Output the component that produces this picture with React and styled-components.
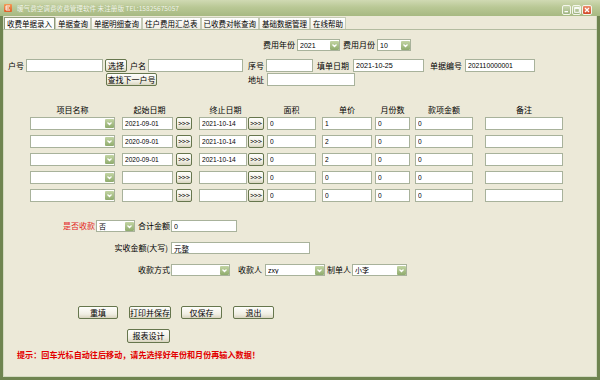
import React from "react";
import styled, { createGlobalStyle } from "styled-components";

const Global = createGlobalStyle`
  html, body { margin: 0; padding: 0; background: #ece9d8; }
  body { font-family: "Noto Sans CJK SC", "Liberation Sans", sans-serif; }
`;

const Window = styled.div`
  width: 600px;
  height: 380px;
  display: flex;
  flex-direction: column;
  overflow: hidden;
  background: #ece9d8;
`;

const TitleBar = styled.div`
  flex: none;
  height: 16px;
  display: flex;
  align-items: center;
  padding: 0 8px 0 4px;
  background: linear-gradient(#d0dab3, #b9c895 45%, #a7b982);
`;

const AppIcon = styled.span`
  flex: none;
  width: 8px;
  height: 8px;
  border-radius: 1px;
  background: linear-gradient(#f39a55, #e0602a);
  display: flex;
  align-items: center;
  justify-content: center;
`;

const Title = styled.span`
  margin-left: 5px;
  flex: 1;
  font-size: 6.6px;
  color: #f6f8ee;
  white-space: nowrap;
  text-shadow: 0 0 1px #9aae74;
`;

const Ctl = styled.span`
  flex: none;
  box-sizing: border-box;
  width: ${p => (p.$close ? 10 : 9)}px;
  height: 10px;
  margin-left: 1px;
  margin-top: 3px;
  border: 1px solid #f4f6ec;
  border-radius: 2px;
  background: ${p =>
    p.$close
      ? "linear-gradient(#ec8d6c, #d2492a)"
      : "linear-gradient(#cbd8b0, #9db27f)"};
  display: flex;
  align-items: center;
  justify-content: center;
`;

const Body = styled.div`
  flex: 1;
  display: flex;
  flex-direction: column;
  border: 3px solid #6f8450;
  border-top: none;
  box-shadow: inset 1px 0 0 #d3dac0, inset -1px -1px 0 #d3dac0;
`;

const TabBar = styled.div`
  flex: none;
  display: flex;
  height: 12px;
  margin-top: 1px;
  padding-left: 1px;
  border-bottom: 1px solid #b3bca0;
`;

const Tab = styled.div`
  box-sizing: border-box;
  height: 12px;
  padding: 0 2px;
  font-size: 7.5px;
  line-height: 11px;
  white-space: nowrap;
  color: #000;
  border: 1px solid ${p => (p.$active ? "#8e9978" : "#c6cbb6")};
  border-bottom: none;
  background: ${p =>
    p.$active ? "#fdfdfb" : "linear-gradient(#ffffff, #f0eee4)"};
`;

const Row = styled.div`
  flex: none;
  display: flex;
  align-items: center;
  height: ${p => p.$h || 13}px;
  margin-top: ${p => p.$mt || 0}px;
`;

const Label = styled.span`
  flex: none;
  margin-left: ${p => p.$ml || 0}px;
  width: ${p => (p.$w ? `${p.$w}px` : "auto")};
  text-align: ${p => p.$align || "left"};
  font-size: 8px;
  line-height: 12px;
  white-space: nowrap;
  color: ${p => (p.$red ? "#e31d1d" : "#000")};
`;

const Field = styled.input`
  flex: none;
  box-sizing: border-box;
  margin: 0 0 0 ${p => p.$ml || 0}px;
  width: ${p => p.$w}px;
  height: 100%;
  padding: 0 2px;
  border: 1px solid #a8b29b;
  background: #fff;
  font-family: "Liberation Sans", "Noto Sans CJK SC", sans-serif;
  font-size: ${p => p.$fs || 7}px;
  color: #000;
  outline: none;
`;

const Combo = styled.div`
  flex: none;
  box-sizing: border-box;
  margin-left: ${p => p.$ml || 0}px;
  width: ${p => p.$w}px;
  height: 100%;
  display: flex;
  align-items: center;
  padding-left: 2px;
  border: 1px solid #a8b29b;
  background: #fff;
  font-family: "Liberation Sans", "Noto Sans CJK SC", sans-serif;
  font-size: 7px;
`;

const ComboText = styled.span`
  flex: 1;
  overflow: hidden;
  white-space: nowrap;
`;

const Arrow = styled.span`
  flex: none;
  width: 9px;
  height: 9px;
  border-radius: 1px;
  background: linear-gradient(#c3d5a4, #8fab6d);
  display: flex;
  align-items: center;
  justify-content: center;
`;

const Btn = styled.button`
  flex: none;
  box-sizing: border-box;
  margin: 0 0 0 ${p => p.$ml || 0}px;
  width: ${p => p.$w}px;
  height: 100%;
  padding: 0;
  border: 1px solid #66764d;
  border-radius: 2px;
  background: linear-gradient(#fefefb, #f0eee3 65%, #d9d5c0);
  font-family: "Noto Sans CJK SC", "Liberation Sans", sans-serif;
  font-size: ${p => p.$fs || 8}px;
  line-height: 1;
  color: #000;
  white-space: nowrap;
  display: flex;
  align-items: center;
  justify-content: center;
`;

const Head = styled.span`
  flex: none;
  box-sizing: border-box;
  margin-left: ${p => p.$ml || 0}px;
  width: ${p => p.$w}px;
  padding-left: ${p => p.$shift || 0}px;
  text-align: center;
  font-size: 8px;
  line-height: 11px;
  color: #000;
  white-space: nowrap;
`;

const Hint = styled.div`
  flex: none;
  margin: 7px 0 0 14px;
  font-size: 8.1px;
  line-height: 10px;
  font-weight: bold;
  color: #e30000;
  white-space: nowrap;
`;

const Chevron = () => (
  <svg width="7" height="7" viewBox="0 0 7 7">
    <path d="M1.5 2.5 L3.5 4.5 L5.5 2.5" fill="none" stroke="#fff" strokeWidth="1.3" />
  </svg>
);

const Select = ({ ml, w, value }) => (
  <Combo $ml={ml} $w={w}>
    <ComboText>{value}</ComboText>
    <Arrow>
      <Chevron />
    </Arrow>
  </Combo>
);

const tabs = ["收费单据录入", "单据查询", "单据明细查询", "住户费用汇总表", "已收费对帐查询", "基础数据管理", "在线帮助"];

const cols = [
  { key: "name", ml: 27, w: 85, kind: "combo", title: "项目名称" },
  { key: "start", ml: 7, w: 51, title: "起始日期", shift: 4 },
  { key: "b1", ml: 3, w: 16, kind: "btn" },
  { key: "end", ml: 7, w: 48, title: "终止日期", shift: 5 },
  { key: "b2", ml: 1, w: 16, kind: "btn" },
  { key: "area", ml: 3, w: 49, title: "面积" },
  { key: "price", ml: 6, w: 50, title: "单价" },
  { key: "months", ml: 3, w: 35, title: "月份数" },
  { key: "amount", ml: 5, w: 58, title: "款项金额" },
  { key: "note", ml: 12, w: 78, title: "备注" },
];

const items = [
  { start: "2021-09-01", end: "2021-10-14", area: "0", price: "1", months: "0", amount: "0" },
  { start: "2020-09-01", end: "2021-10-14", area: "0", price: "2", months: "0", amount: "0" },
  { start: "2020-09-01", end: "2021-10-14", area: "0", price: "2", months: "0", amount: "0" },
  { start: "", end: "", area: "0", price: "0", months: "0", amount: "0" },
  { start: "", end: "", area: "0", price: "0", months: "0", amount: "0" },
];

export default function App() {
  return (
    <Window>
      <Global />
      <TitleBar>
        <AppIcon>
          <svg width="6" height="6" viewBox="0 0 6 6">
            <path d="M1 1 H5 M1 3 H4 M1 1 V5 H5" fill="none" stroke="#fff" strokeWidth="0.9" />
          </svg>
        </AppIcon>
        <Title>暖气费空调费收费管理软件 未注册版 TEL:15825675057</Title>
        <Ctl>
          <svg width="6" height="6" viewBox="0 0 6 6">
            <rect x="0.5" y="4" width="3.5" height="1.3" fill="#fff" />
          </svg>
        </Ctl>
        <Ctl>
          <svg width="6" height="6" viewBox="0 0 6 6">
            <rect x="0.7" y="0.7" width="4.6" height="4.6" fill="none" stroke="#fff" strokeWidth="1" />
            <rect x="0.7" y="0.5" width="4.6" height="1.3" fill="#fff" />
          </svg>
        </Ctl>
        <Ctl $close>
          <svg width="6" height="6" viewBox="0 0 6 6">
            <path d="M1 1 L5 5 M5 1 L1 5" stroke="#fff" strokeWidth="1.3" />
          </svg>
        </Ctl>
      </TitleBar>

      <Body>
        <TabBar>
          {tabs.map((t, i) => (
            <Tab key={t} $active={i === 0}>{t}</Tab>
          ))}
        </TabBar>

        <Row $mt={9} $h={12}>
          <Label $ml={260} $w={32}>费用年份</Label>
          <Select ml={2} w={43} value="2021" />
          <Label $ml={3} $w={32}>费用月份</Label>
          <Select ml={2} w={34} value="10" />
        </Row>

        <Row $mt={8}>
          <Label $ml={5} $w={16}>户号</Label>
          <Field $ml={2} $w={77} readOnly defaultValue="" />
          <Btn $ml={2} $w={22}>选择</Btn>
          <Label $ml={3} $w={16}>户名</Label>
          <Field $ml={2} $w={95} readOnly defaultValue="" />
          <Label $ml={5} $w={16}>序号</Label>
          <Field $ml={2} $w={47} readOnly defaultValue="" />
          <Label $ml={4} $w={32}>填单日期</Label>
          <Field $ml={4} $w={71} $fs={7.2} readOnly defaultValue="2021-10-25" />
          <Label $ml={6} $w={32}>单据编号</Label>
          <Field $ml={3} $w={70} $fs={6.8} readOnly defaultValue="202110000001" />
        </Row>

        <Row $mt={1}>
          <Btn $ml={103} $w={51}>查找下一户号</Btn>
          <Label $ml={91} $w={16}>地址</Label>
          <Field $ml={3} $w={88} readOnly defaultValue="" />
        </Row>

        <Row $mt={18} $h={11}>
          {cols.map(c => (
            <Head key={c.key} $ml={c.ml} $w={c.w} $shift={c.shift}>{c.title || ""}</Head>
          ))}
        </Row>

        {items.map((it, r) => (
          <Row key={r} $mt={r === 0 ? 2 : 5}>
            {cols.map(c => {
              if (c.kind === "combo") return <Select key={c.key} ml={c.ml} w={c.w} value="" />;
              if (c.kind === "btn")
                return (
                  <Btn key={c.key} $ml={c.ml} $w={c.w} $fs={7}>
                    &gt;&gt;&gt;
                  </Btn>
                );
              return (
                <Field
                  key={c.key}
                  $ml={c.ml}
                  $w={c.w}
                  $fs={6.6}
                  readOnly
                  defaultValue={it[c.key] || ""}
                />
              );
            })}
          </Row>
        ))}

        <Row $mt={18} $h={12}>
          <Label $ml={60} $w={32} $red>是否收款</Label>
          <Select ml={1} w={39} value="否" />
          <Label $ml={3} $w={32}>合计金额</Label>
          <Field $ml={1} $w={66} readOnly defaultValue="0" />
        </Row>

        <Row $mt={10} $h={12}>
          <Label $ml={105} $w={60} $align="right">实收金额(大写)</Label>
          <Field $ml={3} $w={139} $fs={7.5} readOnly defaultValue="元整" />
        </Row>

        <Row $mt={10} $h={12}>
          <Label $ml={135} $w={32}>收款方式</Label>
          <Select ml={1} w={59} value="" />
          <Label $ml={8} $w={24}>收款人</Label>
          <Select ml={3} w={60} value="zxy" />
          <Label $ml={2} $w={24}>制单人</Label>
          <Select ml={1} w={55} value="小李" />
        </Row>

        <Row $mt={30}>
          <Btn $ml={75} $w={40}>重填</Btn>
          <Btn $ml={11} $w={42}>打印并保存</Btn>
          <Btn $ml={10} $w={41}>仅保存</Btn>
          <Btn $ml={11} $w={41}>退出</Btn>
        </Row>

        <Row $mt={10} $h={14}>
          <Btn $ml={124} $w={43}>报表设计</Btn>
        </Row>

        <Hint>提示：回车光标自动往后移动，请先选择好年份和月份再输入数据！</Hint>
      </Body>
    </Window>
  );
}
